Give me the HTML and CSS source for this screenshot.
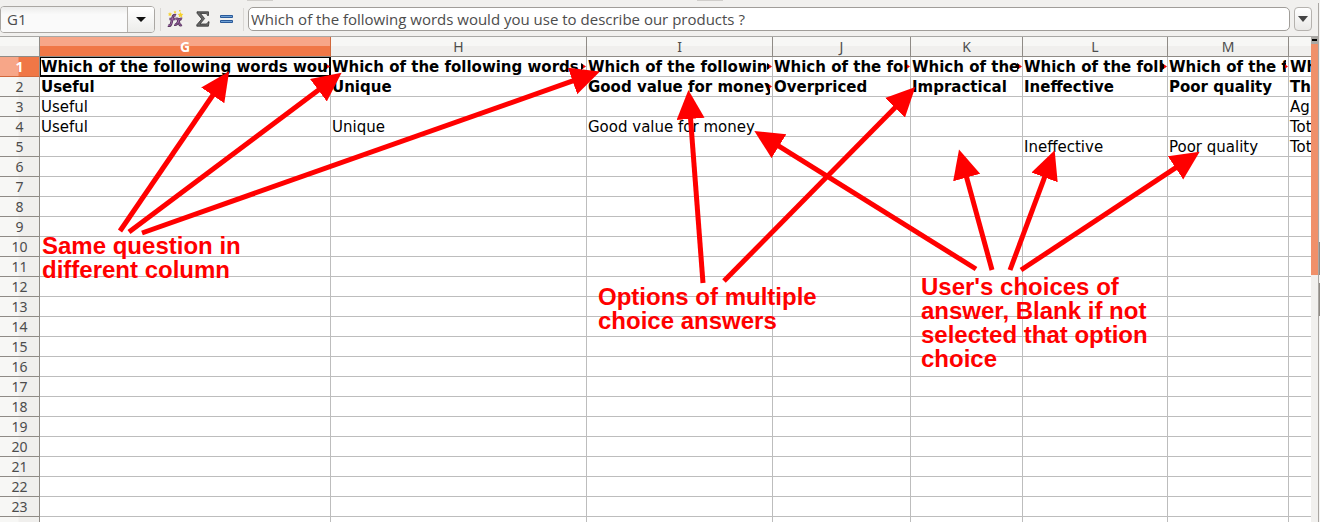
FILE: index.html
```html
<!DOCTYPE html>
<html lang="en">
<head>
<meta charset="utf-8">
<title>Survey results</title>
<link rel="stylesheet" href="styles.css">
</head>
<body>
<div class="window">
  <div class="app">
    <header class="toolbar">
      <span class="grip grip-left"></span><span class="grip grip-mid"></span>
      <div class="namebox">
        <input class="namebox-input" type="text" value="G1" aria-label="Name box">
        <button class="namebox-drop" type="button" aria-label="Choose range"><svg width="10" height="5" viewBox="0 0 10 5"><path d="M0 0h10L5 5z" fill="#111"/></svg></button>
      </div>
      <div class="tools">
        <button class="tool" type="button" aria-label="Function wizard">
          <svg width="18" height="18" viewBox="0 0 18 18" fill="none">
            <path d="M1 15.500c2 .8 3-.5 3.500-3l1.200-5c.5-2 1.500-2.800 3.300-2.200M2.500 9h6M9 9c2-.8 2.300.5 2.800 3s1 3.800 3 2.800M15 9c-2-.8-3 1-4 3s-2 3.300-3.500 2.500" stroke="#4e2f56" stroke-width="2.600"/>
            <path d="M1 15.500c2 .8 3-.5 3.500-3l1.200-5c.5-2 1.500-2.800 3.300-2.200M2.500 9h6M9 9c2-.8 2.300.5 2.800 3s1 3.800 3 2.800M15 9c-2-.8-3 1-4 3s-2 3.300-3.500 2.500" stroke="#a56bac" stroke-width="1"/>
            <path d="M3 2l.7 1.400 1.500.2-1.100 1 .3 1.500L3 5.400l-1.400.7.300-1.500-1.100-1 1.500-.2zM13.500 2l.9 1.700 2 .3-1.400 1.400.3 2-1.800-1-1.800 1 .3-2L10.600 4l2-.3zM8 .5l.5 1 1 .2-.8.7.2 1L8 3l-.9.400.2-1-.8-.7 1-.2zM12 0h1.500v1.500H12z" fill="#f6d22e"/>
          </svg>
        </button>
        <button class="tool" type="button" aria-label="Sum">
          <svg width="14" height="16" viewBox="0 0 14 16"><path d="M1 .8h11.500v3.700h-1c-.3-1.500-.8-2-2.500-2H4.500L8.600 7.600 4 13h5.500c1.600 0 2.200-.8 2.700-2.200h.9l-.7 4.400H.8v-1.400l5-5.800L1 2.200z" fill="#666" stroke="#333" stroke-width=".8"/></svg>
        </button>
        <button class="tool" type="button" aria-label="Formula">
          <svg width="13" height="8" viewBox="0 0 13 8"><path d="M.5.5h12v2H.5zM.5 5.500h12v2H.5z" fill="#6fa0d4" stroke="#2a5a9a" stroke-width="1"/></svg>
        </button>
      </div>
      <input class="formula" type="text" value="Which of the following words would you use to describe our products ?" aria-label="Input line">
      <button class="expand" type="button" aria-label="Expand formula bar"><svg width="10" height="6" viewBox="0 0 10 6"><path d="M0 0h10L5 6z" fill="#444"/></svg></button>
    </header>
    <main class="sheet">
      <table class="grid">
        <colgroup><col class="c-row"><col class="c-g"><col class="c-h"><col class="c-i"><col class="c-j"><col class="c-k"><col class="c-l"><col class="c-m"><col></colgroup>
        <thead><tr><th></th><th class="active">G</th><th>H</th><th>I</th><th>J</th><th>K</th><th>L</th><th>M</th><th></th></tr></thead>
        <tbody>
          <tr class="strong"><th class="active">1</th><td class="selected more"><span>Which of the following words wou</span></td><td class="more"><span>Which of the following words</span></td><td class="more"><span>Which of the followin</span></td><td class="more"><span>Which of the fol</span></td><td class="more"><span>Which of the</span></td><td class="more"><span>Which of the foll</span></td><td class="more"><span>Which of the f</span></td><td>Wh</td></tr>
          <tr class="strong"><th>2</th><td>Useful</td><td>Unique</td><td class="more"><span>Good value for money</span></td><td>Overpriced</td><td>Impractical</td><td>Ineffective</td><td>Poor quality</td><td>Th</td></tr>
          <tr><th>3</th><td>Useful</td><td></td><td></td><td></td><td></td><td></td><td></td><td>Ag</td></tr>
          <tr><th>4</th><td>Useful</td><td>Unique</td><td>Good value for money</td><td></td><td></td><td></td><td></td><td>Tot</td></tr>
          <tr><th>5</th><td></td><td></td><td></td><td></td><td></td><td>Ineffective</td><td>Poor quality</td><td>Tot</td></tr>
          <tr><th>6</th><td></td><td></td><td></td><td></td><td></td><td></td><td></td><td></td></tr>
          <tr><th>7</th><td></td><td></td><td></td><td></td><td></td><td></td><td></td><td></td></tr>
          <tr><th>8</th><td></td><td></td><td></td><td></td><td></td><td></td><td></td><td></td></tr>
          <tr><th>9</th><td></td><td></td><td></td><td></td><td></td><td></td><td></td><td></td></tr>
          <tr><th>10</th><td></td><td></td><td></td><td></td><td></td><td></td><td></td><td></td></tr>
          <tr><th>11</th><td></td><td></td><td></td><td></td><td></td><td></td><td></td><td></td></tr>
          <tr><th>12</th><td></td><td></td><td></td><td></td><td></td><td></td><td></td><td></td></tr>
          <tr><th>13</th><td></td><td></td><td></td><td></td><td></td><td></td><td></td><td></td></tr>
          <tr><th>14</th><td></td><td></td><td></td><td></td><td></td><td></td><td></td><td></td></tr>
          <tr><th>15</th><td></td><td></td><td></td><td></td><td></td><td></td><td></td><td></td></tr>
          <tr><th>16</th><td></td><td></td><td></td><td></td><td></td><td></td><td></td><td></td></tr>
          <tr><th>17</th><td></td><td></td><td></td><td></td><td></td><td></td><td></td><td></td></tr>
          <tr><th>18</th><td></td><td></td><td></td><td></td><td></td><td></td><td></td><td></td></tr>
          <tr><th>19</th><td></td><td></td><td></td><td></td><td></td><td></td><td></td><td></td></tr>
          <tr><th>20</th><td></td><td></td><td></td><td></td><td></td><td></td><td></td><td></td></tr>
          <tr><th>21</th><td></td><td></td><td></td><td></td><td></td><td></td><td></td><td></td></tr>
          <tr><th>22</th><td></td><td></td><td></td><td></td><td></td><td></td><td></td><td></td></tr>
          <tr><th>23</th><td></td><td></td><td></td><td></td><td></td><td></td><td></td><td></td></tr>
          <tr><th></th><td></td><td></td><td></td><td></td><td></td><td></td><td></td><td></td></tr>
        </tbody>
      </table>
      <div class="scrollbar"><span class="split"></span><span class="thumb"></span></div>
    </main>
  </div>
  <div class="edge"><span class="edge-mark"></span><span class="edge-mark"></span></div>
  <svg class="arrows" width="1320" height="522" viewBox="0 0 1320 522" aria-hidden="true">
    <defs><marker id="head" markerUnits="userSpaceOnUse" markerWidth="30" markerHeight="30" refX="1" refY="14" orient="auto"><path d="M0 0L29 14 0 28z" fill="#f00"/></marker></defs>
    <g stroke="#f00" stroke-width="5">
      <path d="M120 231L213.300 94.500" marker-end="url(#head)"/>
      <path d="M129 232L319.200 89.600" marker-end="url(#head)"/>
      <path d="M142 233L573.500 80.700" marker-end="url(#head)"/>
      <path d="M703 283L690.500 117.900" marker-end="url(#head)"/>
      <path d="M724 281L895.700 107" marker-end="url(#head)"/>
      <path d="M976 269L778.100 145.700" marker-end="url(#head)"/>
      <path d="M992 270L966.400 176.600" marker-end="url(#head)"/>
      <path d="M1010 270L1044.900 176.400" marker-end="url(#head)"/>
      <path d="M1021 270L1176.300 167.300" marker-end="url(#head)"/>
    </g>
  </svg>
  <p class="note note-question">Same question in<br>different column</p>
  <p class="note note-options">Options of multiple<br>choice answers</p>
  <p class="note note-choices">User's choices of<br>answer, Blank if not<br>selected that option<br>choice</p>
</div>
</body>
</html>
```
FILE: styles.css
```css
* { box-sizing: border-box; }
body { margin: 0; background: #f1f0ee; font-family: "Noto Sans", sans-serif; color: #4c4c4c; }
button { margin: 0; padding: 0; border: 0; background: none; display: flex; align-items: center; justify-content: center; }
input { font: inherit; color: inherit; min-width: 0; outline: 0; }

.window { position: relative; display: flex; height: 100vh; overflow: hidden; }
.app { flex: 1; min-width: 0; display: flex; flex-direction: column; }

.toolbar { position: relative; display: flex; align-items: center; height: 37px; padding: 2px 6px 0 0; border-bottom: 1px solid #a8a7a4; font-family: "Open Sans", "Noto Sans", sans-serif; font-size: 15px; }
.grip { position: absolute; top: 0; width: 26px; height: 1px; background: #d0cecb; }
.grip-left { left: 247px; }
.grip-mid { left: 697px; }
.namebox { display: flex; width: 155px; height: 27px; border: 1px solid #aaa7a3; border-radius: 4px; background: #fff; overflow: hidden; }
.namebox-input { flex: 1; border: 0; padding: 0 6px; background: linear-gradient(#ececeb, #fafafa 30%); }
.namebox-drop { width: 27px; border-left: 1px solid #b8b5b1; background: linear-gradient(#fff, #ececea); }
.tools { display: flex; align-items: center; justify-content: space-between; width: 84px; height: 23px; margin-left: 5px; padding: 0 10px 0 6px; border-left: 1px solid #dad8d5; border-right: 1px solid #dad8d5; }
.formula { flex: 1; height: 24px; margin-left: 4px; padding: 0 2px; border: 1px solid #a09d99; border-radius: 5px; background: #fff; }
.expand { width: 18px; height: 24px; margin-left: 4px; border: 1px solid #b5b2ae; border-radius: 4px; background: linear-gradient(#fff, #e9e8e6); }

.sheet { flex: 1; display: flex; min-height: 0; overflow: hidden; }
.grid { flex: 1; width: 0; align-self: flex-start; table-layout: fixed; border-collapse: separate; border-spacing: 0; background: #fff; }
.c-row { width: 40px; }
.c-g { width: 291px; }
.c-h { width: 256px; }
.c-i { width: 186px; }
.c-j { width: 138px; }
.c-k { width: 112px; }
.c-l { width: 145px; }
.c-m { width: 121px; }
.grid th, .grid td { height: 20px; padding: 0 1px; line-height: 19px; overflow: hidden; white-space: nowrap; }
.grid th { border-right: 1px solid #8f8b86; border-bottom: 1px solid #8f8b86; font-size: 14px; font-weight: 400; text-align: center; }
.grid thead th { background: linear-gradient(#f7f7f5 50%, #f0efed 50%); }
.grid tbody th { background: linear-gradient(90deg, #f7f7f5 45%, #f0efed 50%); }
.grid td { position: relative; padding-top: 1px; line-height: 18px; border-right: 1px solid #bdbdbd; border-bottom: 1px solid #bdbdbd; font-family: "DejaVu Sans", sans-serif; font-size: 15px; color: #000; }
.grid tr > :last-child { border-right: 0; }
.strong td { font-weight: 700; }
.grid thead .active { background: linear-gradient(#f7a688 50%, #f07746 50%); border-right-color: #d0683c; color: #fff; font-weight: 700; }
.grid tbody .active { background: linear-gradient(90deg, #f7a688 45%, #f07746 50%); border-bottom-color: #d0683c; color: #fff; font-weight: 700; }
.grid .selected { border-color: #000; box-shadow: inset 1px 1px #000, inset -1px -1px #000; }
.more span { display: block; margin-right: 1px; overflow: hidden; }
.more::after { content: ""; position: absolute; z-index: 1; right: 0; top: 6px; width: 5px; height: 7px; background: linear-gradient(90deg, #000 2px, #e00 2px); clip-path: polygon(0 0, 100% 50%, 0 100%); }

.scrollbar { width: 7px; background: #f1f0ee; display: flex; flex-direction: column; }
.split { height: 7px; border: 2px solid #aaa8a4; border-width: 2px 1px 3px; background: #000; }
.thumb { height: 231px; background: #f0906a; }

.edge { width: 2px; margin-top: 3px; border-left: 1px solid #aaa7a3; background: #f4f3f2; padding-top: 239px; display: flex; flex-direction: column; gap: 8px; }
.edge-mark { height: 33px; background: #8f8b86; }

.arrows { position: absolute; left: 0; top: 0; }
.note { position: absolute; margin: 0; color: #f00; font: 700 24px/24px "Liberation Sans", Arial, sans-serif; white-space: nowrap; }
.note-question { left: 42px; top: 234px; }
.note-options { left: 598px; top: 285px; }
.note-choices { left: 921px; top: 275px; }
```
